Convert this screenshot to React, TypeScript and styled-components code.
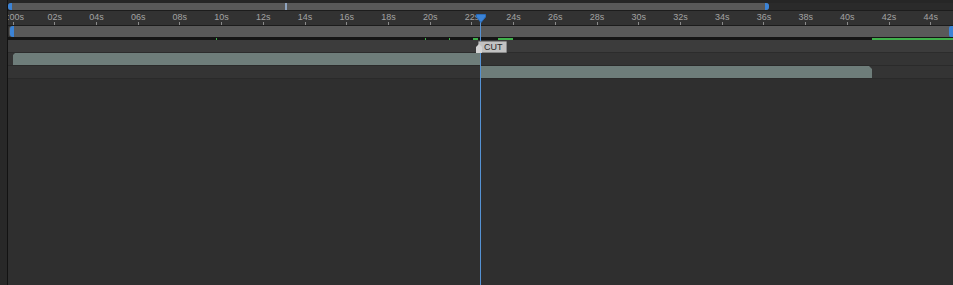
import React from 'react'
import styled, { createGlobalStyle } from 'styled-components'

const PX_PER_SEC = 20.86
const ZERO_X = 5

const GlobalStyle = createGlobalStyle`
  html, body {
    margin: 0;
    padding: 0;
    background: #2f2f2f;
    overflow: hidden;
  }
  body {
    font-family: "Liberation Sans", Arial, sans-serif;
  }
`

const Page = styled.div`
  display: flex;
  width: 953px;
  height: 285px;
  background: #2f2f2f;
`

const Gutter = styled.div`
  width: 7px;
  flex-shrink: 0;
  background: #282828;
  border-right: 1px solid #121212;
`

const Main = styled.div`
  position: relative;
  flex: 1;
  display: flex;
  flex-direction: column;
  overflow: hidden;
`

const TopStrip = styled.div`
  height: 3px;
  background: #262626;
`

const Navigator = styled.div`
  display: flex;
  height: 7px;
  background: #2a2a2a;
`

const NavTrack = styled.div`
  position: relative;
  width: 761px;
  background: #595959;
  border-radius: 3px;
`

const Handle = styled.div<{ $side: 'left' | 'right' }>`
  position: absolute;
  top: 0;
  bottom: 0;
  ${(p) => (p.$side === 'left' ? 'left: 0;' : 'right: 0;')}
  width: 4px;
  background: #3b83d6;
  border-radius: ${(p) => (p.$side === 'left' ? '3px 0 0 3px' : '0 3px 3px 0')};
`

const NavMarker = styled.div`
  position: absolute;
  top: 0;
  bottom: 0;
  left: 277px;
  width: 2px;
  background: #8fa4bf;
`

const Divider = styled.div<{ $color?: string }>`
  height: 1px;
  background: ${(p) => p.$color || '#1c1c1c'};
`

const Ruler = styled.div`
  height: 14px;
  background: #323232;
  display: flex;
  margin-left: ${ZERO_X - PX_PER_SEC}px;
`

const Tick = styled.div`
  width: ${PX_PER_SEC * 2}px;
  flex-shrink: 0;
  display: flex;
  flex-direction: column;
  align-items: center;
  color: #a3a3a3;
  font-size: 9px;
  line-height: 10px;
  padding-top: 1px;
  &::after {
    content: '';
    width: 1px;
    height: 3px;
    background: #8a8a8a;
  }
`

const WorkArea = styled.div`
  position: relative;
  height: 11px;
  background: #595959;
  margin-left: 1px;
  border-radius: 3px 0 0 3px;
`

const WorkHandle = styled.div<{ $side: 'left' | 'right' }>`
  position: absolute;
  top: 0;
  bottom: 0;
  ${(p) => (p.$side === 'left' ? 'left: 1px;' : 'right: 0;')}
  width: 4px;
  background: #3b83d6;
  border-radius: ${(p) => (p.$side === 'left' ? '3px 0 0 3px' : '2px 0 0 2px')};
`

const CacheStrip = styled.div`
  position: relative;
  height: 3px;
  background: #151515;
`

const CacheSeg = styled.div`
  position: absolute;
  top: 1px;
  height: 2px;
  background: #3fb14b;
`

const MarkerRow = styled.div`
  height: 12px;
  background: #3c3c3c;
  border-bottom: 1px solid #2c2c2c;
`

const LayerRow = styled.div`
  height: 12px;
  display: flex;
  align-items: center;
  background: #343434;
  border-bottom: 1px solid #2a2a2a;
`

const LayerBar = styled.div<{ $start: number; $chamfer: 'left' | 'right' }>`
  height: 12px;
  margin-left: ${(p) => p.$start}px;
  background: #6e7d7a;
  clip-path: ${(p) =>
    p.$chamfer === 'left'
      ? 'polygon(2px 0, 100% 0, 100% 100%, 0 100%, 0 2px)'
      : 'polygon(0 0, calc(100% - 3px) 0, 100% 3px, 100% 100%, 0 100%)'};
`

const Empty = styled.div`
  flex: 1;
  background: #2f2f2f;
`

const Playhead = styled.div`
  position: absolute;
  top: 15px;
  bottom: 0;
  left: 472px;
  width: 1px;
  background: #5592d4;
`

const PlayheadCap = styled.svg`
  position: absolute;
  top: 14px;
  left: 468px;
`

const CutFlag = styled.div`
  position: absolute;
  top: 41px;
  left: 468px;
  display: flex;
  align-items: flex-start;
`

const CutPin = styled.svg`
  margin-top: 3px;
  position: relative;
  z-index: 1;
`

const CutLabel = styled.div`
  margin-left: -4px;
  padding: 0 3px 0 5px;
  height: 10px;
  line-height: 10px;
  font-size: 9px;
  color: #2a2a2a;
  background: #c2c2c2;
  border: 1px solid #8a8a8a;
  border-radius: 1px;
`

const ticks = Array.from({ length: 24 }, (_, i) => {
  const s = i * 2
  return s === 0 ? '0:00s' : `${String(s).padStart(2, '0')}s`
})

const cache = [
  { from: 207.8, to: 208.8 },
  { from: 416.8, to: 417.8 },
  { from: 440.8, to: 441.8 },
  { from: 465, to: 470 },
  { from: 490, to: 505 },
  { from: 864, to: 945 },
]

const App = () => (
  <>
    <GlobalStyle />
    <Page>
      <Gutter />
      <Main>
        <TopStrip />
        <Navigator>
          <NavTrack>
            <Handle $side="left" />
            <NavMarker />
            <Handle $side="right" />
          </NavTrack>
        </Navigator>
        <Divider />
        <Ruler>
          {ticks.map((t) => (
            <Tick key={t}>{t}</Tick>
          ))}
        </Ruler>
        <Divider />
        <WorkArea>
          <WorkHandle $side="left" />
          <WorkHandle $side="right" />
        </WorkArea>
        <CacheStrip>
          {cache.map((c) => (
            <CacheSeg key={c.from} style={{ left: c.from, width: c.to - c.from }} />
          ))}
        </CacheStrip>
        <MarkerRow />
        <LayerRow>
          <LayerBar $start={5} $chamfer="left" style={{ width: 467 }} />
        </LayerRow>
        <LayerRow>
          <LayerBar $start={473} $chamfer="right" style={{ width: 391 }} />
        </LayerRow>
        <Empty />
        <Playhead />
        <PlayheadCap width="10" height="9" viewBox="0 0 10 9">
          <path d="M0.5 0.5 H9.5 V3 L5 8.5 L0.5 3 Z" fill="#3b83d6" stroke="#2a6bb8" strokeWidth="1" />
        </PlayheadCap>
        <CutFlag>
          <CutPin width="6" height="9" viewBox="0 0 6 9">
            <path d="M3 0 L6 3 V9 H0 V3 Z" fill="#d4d4d4" />
          </CutPin>
          <CutLabel>CUT</CutLabel>
        </CutFlag>
      </Main>
    </Page>
  </>
)

export default App
